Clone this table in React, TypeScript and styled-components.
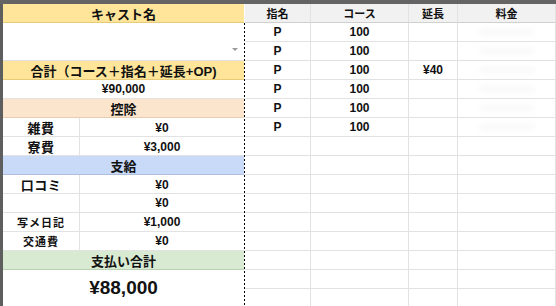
import styled, { createGlobalStyle } from "styled-components";

const GlobalStyle = createGlobalStyle`
  html, body {
    margin: 0;
    padding: 0;
    width: 556px;
    height: 306px;
    overflow: hidden;
    background: #ffffff;
  }
  body {
    font-family: "Liberation Sans", "Noto Sans CJK JP", sans-serif;
    color: #111;
  }
`;

const Sheet = styled.div`
  width: 556px;
  height: 306px;
  display: flex;
  flex-direction: column;
  background: #fff;
`;

const TopBar = styled.div`
  height: 4px;
  background: #646464;
  flex: none;
`;

const Body = styled.div`
  flex: 1;
  display: flex;
  min-height: 0;
`;

const SideStrip = styled.div`
  width: 3px;
  background: #5e5e5e;
  flex: none;
`;

const LeftPanel = styled.div`
  width: 241px;
  flex: none;
  display: flex;
  flex-direction: column;
`;

const Divider = styled.div`
  width: 1px;
  flex: none;
  margin-top: 19px;
  background: repeating-linear-gradient(180deg, #000 0 2px, transparent 2px 4px);
`;

const Band = styled.div<{ $bg: string; $line: string }>`
  height: 19px;
  box-sizing: border-box;
  background: ${(p) => p.$bg};
  border-bottom: 1px solid ${(p) => p.$line};
  display: flex;
  align-items: center;
  justify-content: center;
  font-weight: bold;
  font-size: 13px;
  color: #111;
`;

const SelectCell = styled.div`
  height: 38px;
  box-sizing: border-box;
  position: relative;
  border-bottom: 1px solid #e2e2e2;
`;

const Caret = styled.div`
  position: absolute;
  right: 6px;
  bottom: 9px;
  width: 0;
  height: 0;
  border-left: 3px solid transparent;
  border-right: 3px solid transparent;
  border-top: 3px solid #9a9a9a;
`;

const ValueRow = styled.div`
  height: 19px;
  box-sizing: border-box;
  border-bottom: 1px solid #e2e2e2;
  display: flex;
  align-items: center;
  justify-content: center;
  font-weight: bold;
  font-size: 12px;
`;

const PairRow = styled.div`
  height: 19px;
  box-sizing: border-box;
  border-bottom: 1px solid #e2e2e2;
  display: grid;
  grid-template-columns: 77px 1fr;
`;

const Label = styled.div<{ $small?: boolean }>`
  border-right: 1px solid #e2e2e2;
  display: flex;
  align-items: center;
  justify-content: center;
  font-weight: bold;
  font-size: ${(p) => (p.$small ? 11 : 13)}px;
  letter-spacing: ${(p) => (p.$small ? 1 : 0.5)}px;
`;

const Amount = styled.div`
  display: flex;
  align-items: center;
  justify-content: center;
  font-weight: bold;
  font-size: 12px;
`;

const GrandTotal = styled.div`
  flex: 1;
  display: flex;
  align-items: center;
  justify-content: center;
  font-weight: bold;
  font-size: 19px;
`;

const Grid = styled.div`
  flex: 1;
  display: grid;
  grid-template-columns: 66px 98px 49px 98px;
  grid-auto-rows: 19px;
  align-content: start;
  overflow: hidden;
`;

const Cell = styled.div<{ $head?: boolean }>`
  box-sizing: border-box;
  border-right: 1px solid #e2e2e2;
  border-bottom: 1px solid ${(p) => (p.$head ? "#d0d0d0" : "#e2e2e2")};
  background: ${(p) => (p.$head ? "#f1f1f1" : "#fff")};
  display: flex;
  align-items: center;
  justify-content: center;
  font-weight: bold;
  font-size: ${(p) => (p.$head ? 11 : 12)}px;
  color: #111;
`;

// blurred-out amount in the 料金 column
const Blur = styled.span`
  width: 56px;
  height: 8px;
  border-radius: 4px;
  background: #fafafa;
  filter: blur(2px);
`;

const headers = ["指名", "コース", "延長", "料金"];

const rows: string[][] = [
  ["P", "100", "", "*"],
  ["P", "100", "", "*"],
  ["P", "100", "¥40", "*"],
  ["P", "100", "", "*"],
  ["P", "100", "", "*"],
  ["P", "100", "", "*"],
  ...Array.from({ length: 9 }, () => ["", "", "", ""]),
];

const deductions = [
  { label: "雑費", value: "¥0" },
  { label: "寮費", value: "¥3,000" },
];

const payments = [
  { label: "口コミ", value: "¥0" },
  { label: "", value: "¥0" },
  { label: "写メ日記", value: "¥1,000", small: true },
  { label: "交通費", value: "¥0", small: true },
];

export default function App() {
  return (
    <>
      <GlobalStyle />
      <Sheet>
        <TopBar />
        <Body>
          <SideStrip />
          <LeftPanel>
            <Band $bg="#ffe59a" $line="#e9cc7a">キャスト名</Band>
            <SelectCell>
              <Caret />
            </SelectCell>
            <Band $bg="#ffe59a" $line="#e9cc7a">合計（コース＋指名＋延長+OP)</Band>
            <ValueRow>¥90,000</ValueRow>
            <Band $bg="#fce5cd" $line="#e6cdb3">控除</Band>
            {deductions.map((d) => (
              <PairRow key={d.label}>
                <Label>{d.label}</Label>
                <Amount>{d.value}</Amount>
              </PairRow>
            ))}
            <Band $bg="#c9daf8" $line="#aebfdd">支給</Band>
            {payments.map((d, i) => (
              <PairRow key={i}>
                <Label $small={d.small}>{d.label}</Label>
                <Amount>{d.value}</Amount>
              </PairRow>
            ))}
            <Band $bg="#d9ead3" $line="#b9cfb1">支払い合計</Band>
            <GrandTotal>¥88,000</GrandTotal>
          </LeftPanel>
          <Divider />
          <Grid>
            {headers.map((h) => (
              <Cell $head key={h}>{h}</Cell>
            ))}
            {rows.map((r, i) =>
              r.map((v, j) => (
                <Cell key={`${i}-${j}`}>{v === "*" ? <Blur /> : v}</Cell>
              ))
            )}
          </Grid>
        </Body>
      </Sheet>
    </>
  );
}
